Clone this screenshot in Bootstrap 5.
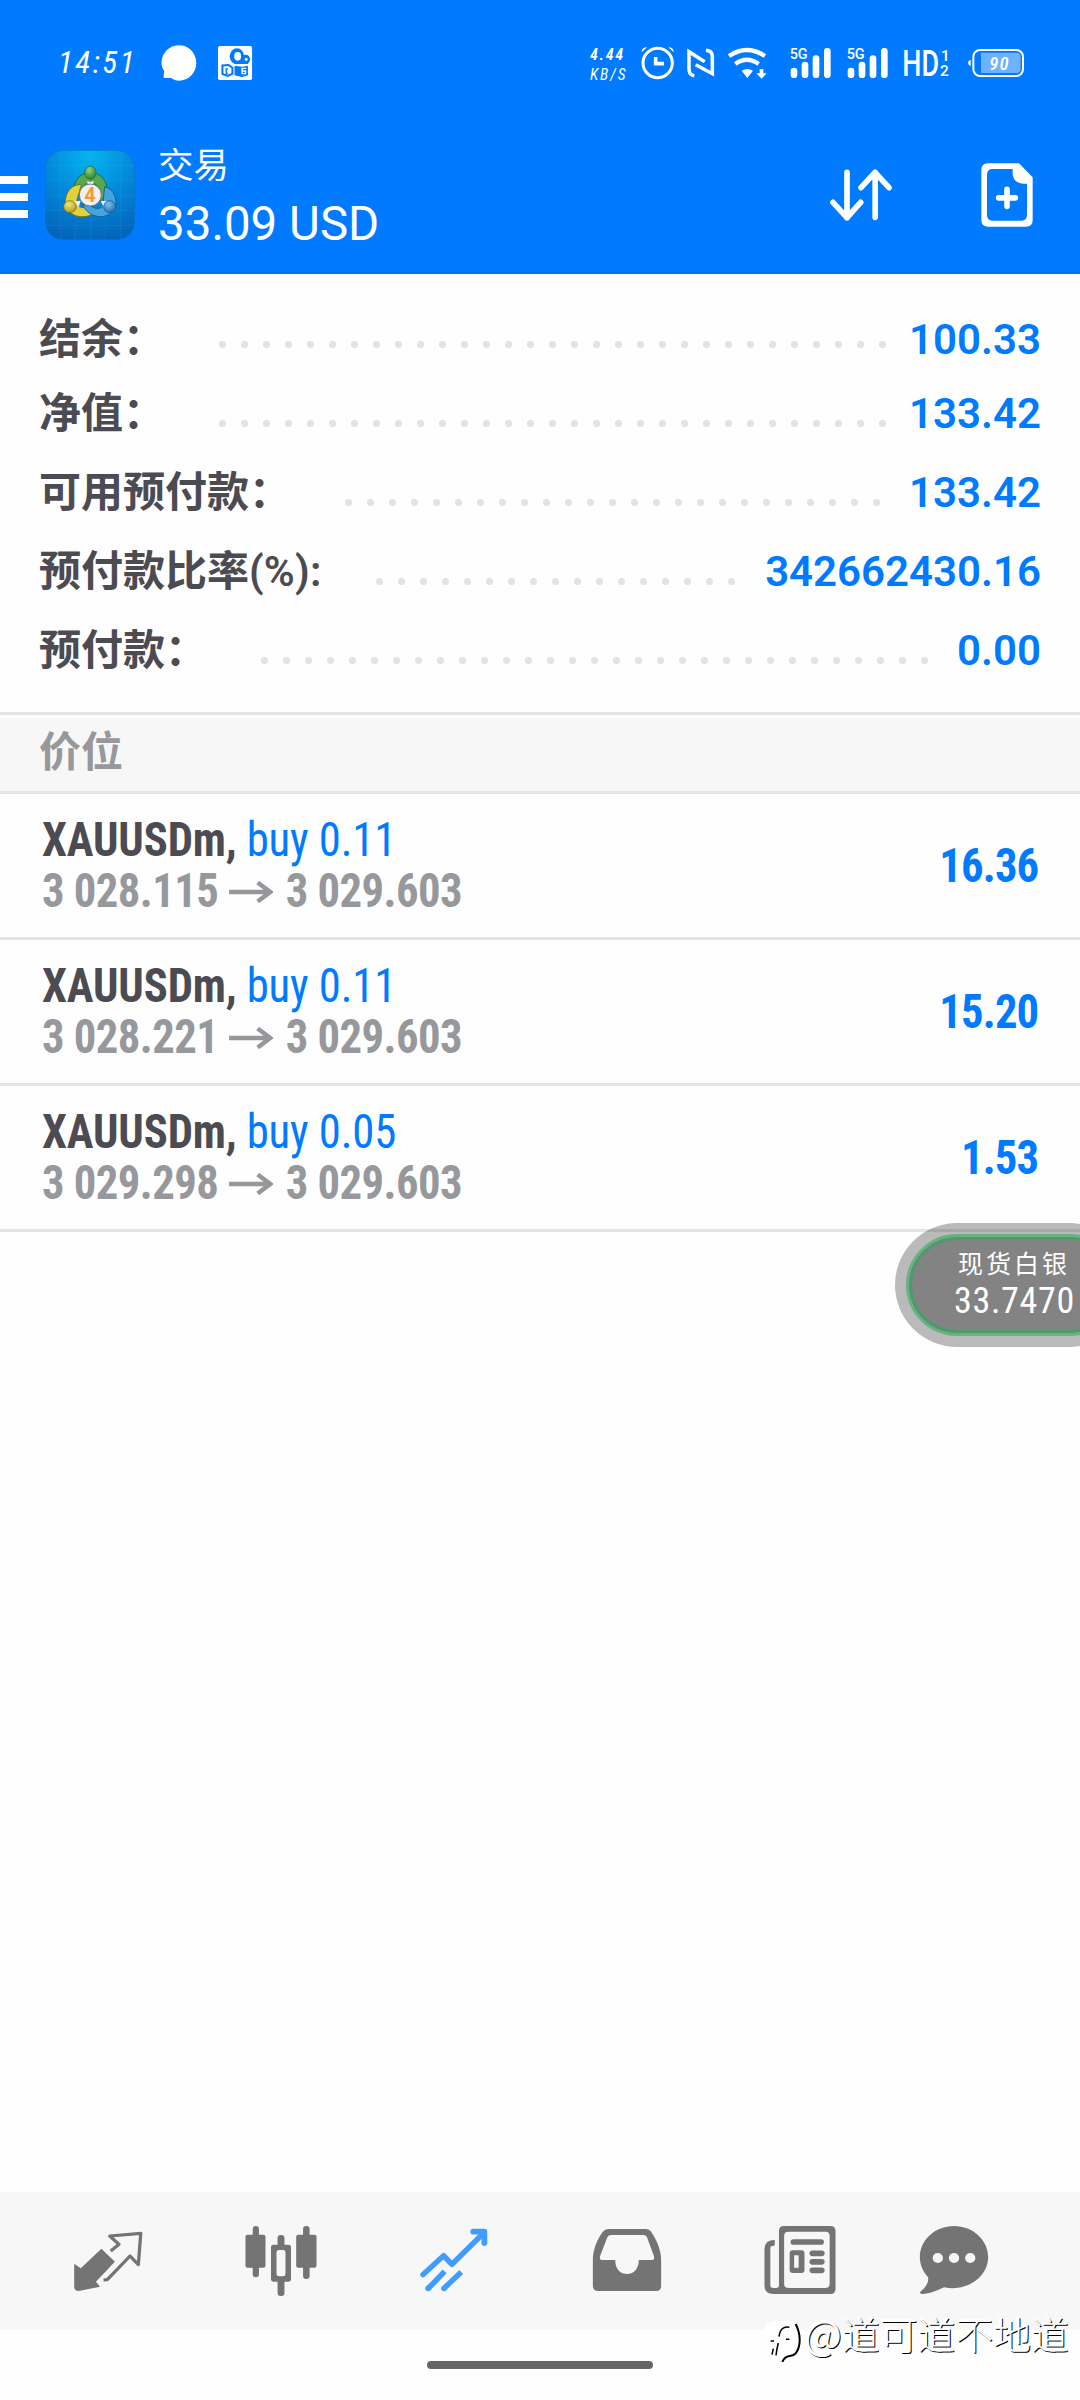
<!DOCTYPE html>
<html lang="zh-CN">
<head>
<meta charset="utf-8">
<meta name="viewport" content="width=device-width, initial-scale=1">
<title>交易</title>
<link href="https://cdn.jsdelivr.net/npm/bootstrap@5.3.0/dist/css/bootstrap.min.css" rel="stylesheet">
<style>
  :root { --blue:#007aff; --ink:#4c4b52; --mute:#97989c; --rule:#e4e4e4; }
  body { font-family:Roboto,"Noto Sans CJK SC",sans-serif; background:#fefefe; color:var(--ink); overflow:hidden; }
  svg { display:block; flex:none; }
  .screen { height:2400px; }
  .top-area { background:var(--blue); height:274px; border-bottom:2px solid #0070e8; }

  /* status bar */
  .status-strip { height:100px; padding:40px 51px 0 58px; }
  .status-strip svg { height:60px; }
  .clock { width:98px; height:44px; padding-top:1px; font:italic 400 31px/43px "Roboto Condensed",Roboto,sans-serif; letter-spacing:2.5px; }
  .speed { width:51px; padding:5px 0 0 3px; font:italic 600 16px/20px "Roboto Condensed",Roboto,sans-serif; letter-spacing:1.7px; }
  .speed div + div { font-weight:400; letter-spacing:1.9px; font-size:15.5px; }

  /* title bar */
  .title-strip { height:172px; padding-right:46px; }
  .menu-lines { width:28px; padding-top:76px; }
  .menu-lines i { display:block; height:8px; margin-bottom:9px; background:#fff; }
  .app-logo { margin:50px 0 0 17px; }
  .title-text { margin:38px 0 0 23px; }
  .t-name { font:400 35.5px/50px "Noto Sans CJK SC",sans-serif; }
  .t-sum { font-size:47.5px; line-height:60px; margin-top:6px; }

  /* account summary */
  .summary { padding:35px 39px 0 39px; height:438px; }
  .sum-row { height:79px; font-size:42px; line-height:60px; }
  .sum-row:first-child { height:74px; }
  .sum-label { font-family:"Noto Sans CJK SC",sans-serif; font-weight:700; margin-top:-3px; }
  .sum-label span { font-family:Roboto,sans-serif; font-weight:600; letter-spacing:.2px; }
  .sum-value { color:var(--blue); font-weight:650; padding-top:1px; }
  .dots { height:7px; margin:37px 16px 0 54px; align-self:flex-start;
          background:radial-gradient(circle at 3.5px 3.5px,#e3e3e3 3.2px,transparent 4px) 0 0/22px 7px repeat-x; }
  .sum-row:first-child .dots { margin-top:32px; }

  /* positions */
  .section-bar { height:82px; padding:0 39px; border-top:3px solid var(--rule); border-bottom:3px solid var(--rule);
                 background:#f7f7f7 linear-gradient(#fefefe,#fefefe) 0 0/100% 3px no-repeat;
                 color:var(--mute); font:700 42px/68px "Noto Sans CJK SC",sans-serif; }
  .position-row { height:146px; padding:21px 42px 0 42px; border-bottom:3px solid var(--rule); white-space:nowrap;
                  font-family:"Roboto Condensed",Roboto,sans-serif; font-size:47.5px; line-height:51px; font-weight:700; letter-spacing:-.15px; }
  .deal { transform:scaleX(.94); transform-origin:0 0; }
  .side { color:var(--blue); font-weight:400; letter-spacing:-.1px; }
  .prices { color:var(--mute); letter-spacing:-.6px; }
  .prices svg { margin:0 13px 0 12px; }
  .profit { color:var(--blue); letter-spacing:-.9px; margin-top:26px; transform:scaleX(.94); transform-origin:100% 0; }

  /* bottom bar */
  .tab-strip { height:138px; background:#f7f7f7; padding:28px 56px 0 21px; color:#747474; }
  .tab-strip a { width:173.2px; color:inherit; display:flex; justify-content:center; }
  .tab-strip a:last-child { width:135px; }
  .tab-strip svg { width:80px; height:80px; }
  .tab-strip a.active { color:#429cff; }
  .home-bar { width:226px; height:8px; border-radius:4px; background:#666; margin:31px auto 31px 427px; }

  /* floating quote and signature, both over the page */
  .quote-pill { position:absolute; left:895px; top:1223px; width:236px; height:124px; padding:11px; border-radius:62px; background:rgba(0,0,0,.265); }
  .quote-ring { height:102px; border-radius:51px; border:3px solid #66b283; background:#838383; box-shadow:inset 0 0 0 3px #4e9a6a; color:#fff; text-align:center; }
  .q-name { font:400 25px/30px "Noto Sans CJK SC",sans-serif; letter-spacing:3px; margin-top:10px; padding-left:2px; }
  .q-price { font:450 36px/42px "Roboto Condensed",Roboto,sans-serif; letter-spacing:.7px; margin-top:3px; padding-left:3px; }
  .signature { position:absolute; left:762px; top:2305px; color:#fff; white-space:nowrap;
               font:300 37.8px/56px "Noto Sans CJK SC",sans-serif; text-shadow:1px 1px 0 #000, -1px -1px 0 #fff; }
  .sig-at { font-size:40px; font-weight:400; width:38px; margin-left:-4px; }
</style>
</head>
<body>
<div class="screen position-relative overflow-hidden d-flex flex-column">

  <header class="top-area text-white flex-shrink-0">
    <div class="status-strip d-flex">
      <div class="clock">14:51</div>
      <svg width="46" viewBox="453 60 133.6 180" preserveAspectRatio="none"><path fill="#fff" d="M520 76c28 0 50 23 50 53s-22 53-50 53c-9 0-17-3-23-8h-19q-3 0-3-4l2-17c-5-7-8-15-8-24 0-30 23-53 51-53z"/></svg>
      <svg width="56" viewBox="586.6 60 162.6 180" preserveAspectRatio="none">
        <rect x="633" y="78" width="99" height="102" rx="5" fill="#fff"/>
        <g fill="#007aff"><ellipse cx="688" cy="109" rx="21" ry="24"/><ellipse cx="714" cy="118" rx="12" ry="14"/><rect x="682" y="124" width="38" height="8"/><path d="M681 137l22 3 17-3v29l-17 5-22-5z"/></g>
        <g fill="#fff"><ellipse cx="690" cy="109" rx="10" ry="13"/><ellipse cx="715" cy="118" rx="4" ry="5"/></g>
        <path d="M646 136v26l16 6 13-7v-18l-11-8z" fill="#fff" stroke="#007aff" stroke-width="6"/>
        <path d="M662 147h-5v14h5" fill="none" stroke="#007aff" stroke-width="4"/>
        <path d="M715 145h-12v16h10v-8h-8" fill="none" stroke="#fff" stroke-width="4"/>
      </svg>
      <div class="speed ms-auto"><div>4.44</div><div>KB/S</div></div>
      <svg width="43" viewBox="234 60 129 180"><g fill="none" stroke="#fff"><circle cx="293" cy="129" r="44" stroke-width="9"/><path d="M287 111v20h25" stroke-width="11"/></g><path d="M261 82q-16 0-16 15zM325 82q16 0 16 15z" fill="#fff"/></svg>
      <svg width="40" viewBox="363 60 120 180"><path d="M403 167q-16-2-16-20V95l47 30M438 91q19 2 19 18v52l-50-27" fill="none" stroke="#fff" stroke-width="10.500"/></svg>
      <svg width="60" viewBox="483 60 180 180"><g fill="none" stroke="#fff" stroke-width="13"><path d="M507 108q53-36 108 0M526 132q34-25 70 0"/></g><path d="M545 152q17-10 34 0l-17 22zM599 147h11v13h10l-15 16-16-16h10z" fill="#fff"/></svg>
      <svg width="57" viewBox="663 60 171 180"><g stroke="#fff" stroke-width="20" stroke-linecap="round"><path d="M702 153v11M735 135v29M768 116v48M802 94v70"/></g><text x="689" y="117" font-family="Roboto" font-size="44" font-weight="500" fill="#fff" textLength="54" lengthAdjust="spacingAndGlyphs">5G</text></svg>
      <svg width="57" viewBox="663 60 171 180"><g stroke="#fff" stroke-width="20" stroke-linecap="round"><path d="M702 153v11M735 135v29M768 116v48M802 94v70"/></g><text x="689" y="117" font-family="Roboto" font-size="44" font-weight="500" fill="#fff" textLength="54" lengthAdjust="spacingAndGlyphs">5G</text></svg>
      <svg width="60" viewBox="1005 60 180 180"><g font-family="Roboto" font-weight="500" fill="#fff"><text x="1027" y="168" font-size="108" textLength="110" lengthAdjust="spacingAndGlyphs">HD</text><text x="1143" y="122" font-size="46">1</text><text x="1140" y="168" font-size="46">2</text></g></svg>
      <svg width="74" viewBox="1185 60 222 180"><rect x="1240" y="90" width="149" height="78" rx="20" fill="none" stroke="#fff" stroke-width="6"/><path d="M1263 98h106q13 0 13 13v36q0 12-13 12h-106z" fill="#6eb3ff"/><path d="M1232 119v19q-8-3-8-9.500t8-9.500z" fill="#fff"/><text x="1288" y="149" font-family="Roboto Condensed" font-style="italic" font-weight="500" font-size="56" textLength="58" fill="#fff">90</text></svg>
    </div>

    <nav class="title-strip d-flex">
      <div class="menu-lines"><i></i><i></i><i></i></div>
      <svg class="app-logo" width="90" height="90" viewBox="135 60 270 270">
        <defs>
          <radialGradient id="sky" cx=".5" cy=".05" r="1"><stop offset="0" stop-color="#06b4ee"/><stop offset=".5" stop-color="#0388da"/><stop offset="1" stop-color="#0362b8"/></radialGradient>
          <radialGradient id="gr" cx=".4" cy=".3" r=".8"><stop offset="0" stop-color="#93d08a"/><stop offset="1" stop-color="#1f7a26"/></radialGradient>
          <radialGradient id="ye" cx=".4" cy=".3" r=".8"><stop offset="0" stop-color="#f2e777"/><stop offset="1" stop-color="#a99212"/></radialGradient>
          <radialGradient id="bl" cx=".4" cy=".3" r=".8"><stop offset="0" stop-color="#7cc3ee"/><stop offset="1" stop-color="#1767ab"/></radialGradient>
        </defs>
        <rect x="136" y="61" width="268" height="268" rx="54" fill="url(#sky)" stroke="#0672c4" stroke-width="2"/>
        <path d="M182 62v266M227 61v268M272 61v268M317 61v268M362 62v266M136 106h268M136 151h268M136 196h268M136 241h268M136 286h268" stroke="#4fb5f2" stroke-opacity=".22" stroke-width="2"/>
        <g stroke-width="2.500">
          <path d="M224 190c-6-36 14-62 47-62s54 28 48 58c-2 14-10 22-18 28l-4-38c-6-22-46-22-50 0l-6 14z" fill="#56a852" stroke="#1d6a2c"/>
          <path d="M244 164c-28-2-48 22-48 52 2 30 28 46 54 44 12 0 22-4 30-10l-22-18c-16 4-30-4-28-20z" fill="#e0d13d" stroke="#7b6d0d"/>
          <path d="M314 170c22 6 34 26 34 48-2 26-24 42-46 42-24 0-44-14-54-36l24 2c10 12 28 12 36 2z" fill="#45a3de" stroke="#12558e"/>
        </g>
        <path d="M262 152l9 5 10-5-2 14h-16zM222 214l20-2-6 20zM302 212l20 2-12 16z" fill="#eef5f8"/>
        <ellipse cx="271" cy="128" rx="17" ry="20" fill="url(#gr)" stroke="#1d6a2c" stroke-width="2"/>
        <ellipse cx="210" cy="230" rx="19" ry="18" fill="url(#ye)" stroke="#7b6d0d" stroke-width="2"/>
        <ellipse cx="329" cy="230" rx="18" ry="18" fill="url(#bl)" stroke="#12558e" stroke-width="2"/>
        <circle cx="271" cy="195" r="33" fill="#f1f1f4" stroke="#77786a" stroke-width="3"/>
        <text x="270" y="216" text-anchor="middle" font-family="Roboto" font-weight="700" font-size="60" fill="#f49a2e">4</text>
      </svg>
      <div class="title-text">
        <div class="t-name">交易</div>
        <div class="t-sum">33.09 USD</div>
      </div>
      <svg class="ms-auto" width="90" height="180" viewBox="120 -90 270 540"><path d="M201 127v136M159 217l42 46 41-46M285.500 262V127M243 173l42-46 42 46" fill="none" stroke="#fff" stroke-width="17" stroke-linecap="round" stroke-linejoin="round"/></svg>
      <svg width="124" height="180" viewBox="390 -90 372 540"><path fill="#fff" fill-rule="evenodd" d="M624 100h93l41 42v128q0 20-20 20H624q-20 0-20-20V120q0-20 20-20zm14 17q-17 0-17 17v121q0 17 17 17h86q17 0 17-17v-94h-13q-30-4-30-31v-13z"/><path d="M656 203.500h50M681 178v51" stroke="#fff" stroke-width="17" stroke-linecap="round"/></svg>
    </nav>
  </header>

  <section class="summary flex-shrink-0">
    <div class="sum-row d-flex"><div class="sum-label">结余：</div><div class="dots flex-grow-1"></div><div class="sum-value">100.33</div></div>
    <div class="sum-row d-flex"><div class="sum-label">净值：</div><div class="dots flex-grow-1"></div><div class="sum-value">133.42</div></div>
    <div class="sum-row d-flex"><div class="sum-label">可用预付款：</div><div class="dots flex-grow-1"></div><div class="sum-value">133.42</div></div>
    <div class="sum-row d-flex"><div class="sum-label">预付款比率<span>(%):</span></div><div class="dots flex-grow-1"></div><div class="sum-value">342662430.16</div></div>
    <div class="sum-row d-flex"><div class="sum-label">预付款：</div><div class="dots flex-grow-1"></div><div class="sum-value">0.00</div></div>
  </section>

  <section class="flex-grow-1">
    <div class="section-bar">价位</div>
    <div class="position-row d-flex justify-content-between">
      <div class="deal"><div>XAUUSDm, <span class="side">buy 0.11</span></div>
        <div class="prices d-flex align-items-center"><span>3 028.115</span><svg width="47" height="24" viewBox="0 0 44 24" preserveAspectRatio="none"><path d="M0 12h41M28.500 2.500L41 12 28.500 21.500" fill="none" stroke="#96979b" stroke-width="4.500"/></svg><span>3 029.603</span></div></div>
      <div class="profit">16.36</div>
    </div>
    <div class="position-row d-flex justify-content-between">
      <div class="deal"><div>XAUUSDm, <span class="side">buy 0.11</span></div>
        <div class="prices d-flex align-items-center"><span>3 028.221</span><svg width="47" height="24" viewBox="0 0 44 24" preserveAspectRatio="none"><path d="M0 12h41M28.500 2.500L41 12 28.500 21.500" fill="none" stroke="#96979b" stroke-width="4.500"/></svg><span>3 029.603</span></div></div>
      <div class="profit">15.20</div>
    </div>
    <div class="position-row d-flex justify-content-between">
      <div class="deal"><div>XAUUSDm, <span class="side">buy 0.05</span></div>
        <div class="prices d-flex align-items-center"><span>3 029.298</span><svg width="47" height="24" viewBox="0 0 44 24" preserveAspectRatio="none"><path d="M0 12h41M28.500 2.500L41 12 28.500 21.500" fill="none" stroke="#96979b" stroke-width="4.500"/></svg><span>3 029.603</span></div></div>
      <div class="profit">1.53</div>
    </div>
  </section>

  <nav class="tab-strip d-flex flex-shrink-0">
    <a><svg viewBox="199 120 232 240" preserveAspectRatio="none"><path fill="currentColor" d="M296 206l39 39-55 60 12 15-62 13q-12 0-13-11v-71l19 14z"/><path d="M323 213l24-20-27-25 90-8-7 94-24-26-66 71-11 1" fill="none" stroke="currentColor" stroke-width="9.500" stroke-linejoin="round"/></svg></a>
    <a><svg viewBox="700 120 232 240" preserveAspectRatio="none"><g fill="currentColor"><rect x="713" y="164" width="58" height="99" rx="6"/><rect x="734" y="138" width="18" height="154" rx="9"/><rect x="860" y="164" width="59" height="99" rx="6"/><rect x="880" y="138" width="19" height="159" rx="9"/><rect x="806" y="165" width="20" height="183" rx="9"/><rect x="787" y="194" width="58" height="111" rx="7"/></g><rect x="803" y="210" width="26" height="79" rx="7" fill="#f7f7f7"/></svg></a>
    <a class="active"><svg viewBox="1203 120 232 240" preserveAspectRatio="none"><g fill="none" stroke="currentColor" stroke-linejoin="round" stroke-width="16"><path d="M1229 284l60-57 24 26 90-92" stroke-linecap="round"/><path d="M1375 155h32v34" stroke-width="17" stroke-linecap="round"/><path d="M1292 274l-48 52M1340 276l-50 49"/></g><g fill="currentColor"><circle cx="1244" cy="325" r="8.500"/><circle cx="1290" cy="325" r="8.500"/></g></svg></a>
    <a><svg viewBox="138 120 232 240" preserveAspectRatio="none"><path fill="currentColor" fill-rule="evenodd" d="M200 147h110q9 0 14 8c17 26 29 56 29 85v78q0 15-15 15H171q-16 0-16-15v-78c0-30 12-62 29-85q6-8 16-8zm8 18q-8 0-11 7l-21 56q-3 12 7 12h37c-2 56 70 56 68 0h37q10 0 7-12l-20-56q-3-7-11-7z"/></svg></a>
    <a><svg viewBox="642 120 232 240" preserveAspectRatio="none"><path fill="currentColor" fill-rule="evenodd" d="M712 138h134q15 0 15 15v173q0 16-15 16H681q-26 0-26-26V207q0-27 30-27v14q0 4-8 4-5 0-5 6v112q0 8 8 8h9q8 0 8-8V153q0-15 15-15zm12 17q-12 0-12 13v143q0 13 12 13h108q12 0 12-13V168q0-13-12-13z"/><g stroke="currentColor" stroke-width="17" stroke-linecap="round" fill="none"><path d="M739 186h80M794 220h27M794 245.500h27M794 271h27"/></g><path fill="currentColor" fill-rule="evenodd" d="M737 211h25q9 0 9 9v50q0 9-9 9h-25q-9 0-9-9v-50q0-9 9-9zm4 15v37h13v-37z"/></svg></a>
    <a><svg viewBox="1089 120 232 240" preserveAspectRatio="none"><path fill="currentColor" d="M1205 138c55 0 99 42 99 94 0 58-60 104-128 90-20 10-42 20-63 20q-12-2-3-9c14-12 22-26 20-41-14-16-24-36-24-60 0-52 44-94 99-94z"/><g fill="#f7f7f7"><circle cx="1158" cy="234" r="15"/><circle cx="1205" cy="234" r="15"/><circle cx="1252" cy="234" r="15"/></g></svg></a>
  </nav>
  <div class="flex-shrink-0"><div class="home-bar"></div></div>

  <div class="quote-pill"><div class="quote-ring overflow-hidden">
    <div class="q-name">现货白银</div>
    <div class="q-price">33.7470</div>
  </div></div>

  <div class="signature d-flex">
    <svg width="46" height="60" viewBox="21 -15 138 180"><path d="M60 33h42q37 4 37 45 0 38-27 54-24 0-30 20-34-10-56-20-8-30 0-75 8-22 34-24z" fill="#fff"/><g fill="none" stroke="#000"><path d="M103 52c-18-4-28 6-31 28M47 93h10M70 99q-5 18-7 37M51 134l4-18M93 88h10" stroke-width="4.500"/><path d="M122 42c16 30 16 68 0 88q-6 7-18 8-16 2-22 18" stroke-width="6"/></g></svg>
    <span class="sig-at">@</span><span>道可道不地道</span>
  </div>
</div>
<script src="https://cdn.jsdelivr.net/npm/bootstrap@5.3.0/dist/js/bootstrap.bundle.min.js"></script>
</body>
</html>
